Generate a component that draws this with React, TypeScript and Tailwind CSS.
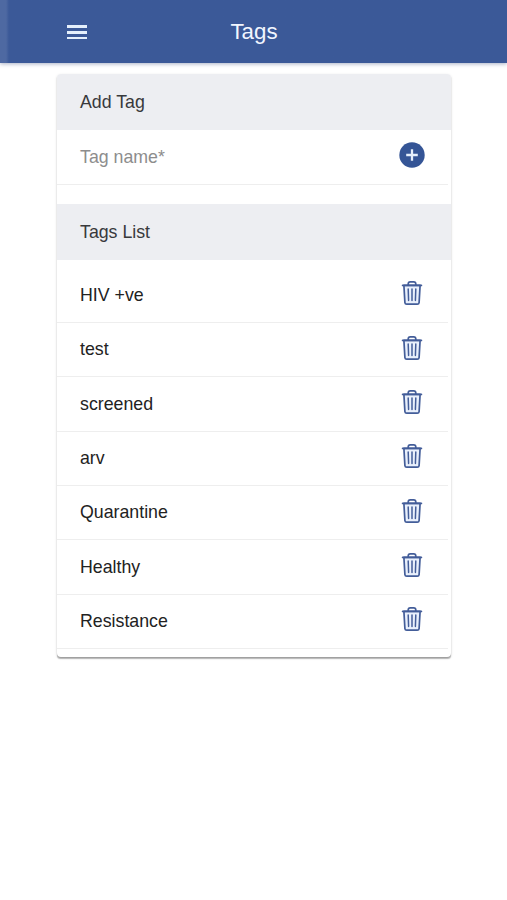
const tags = [
  "HIV +ve",
  "test",
  "screened",
  "arv",
  "Quarantine",
  "Healthy",
  "Resistance",
]

function TrashIcon() {
  return (
    <svg
      width="22"
      height="26"
      viewBox="0 0 22 26"
      fill="none"
      stroke="#435d99"
      strokeWidth="1.7"
      strokeLinecap="round"
      strokeLinejoin="round"
    >
      <path d="M2.9 5.4 3.9 22.6Q4.1 24.2 5.7 24.2H16.3Q17.9 24.2 18.1 22.6L19.1 5.4Z" fill="#e9f0fc" />
      <path d="M1.6 5.4H20.4" />
      <path d="M7.2 5.2V4Q7.2 1.9 9.3 1.9H12.7Q14.8 1.9 14.8 4V5.2" />
      <path d="M7.2 9 7.6 20.4M11 9V20.4M14.8 9 14.4 20.4" strokeWidth="1.5" />
    </svg>
  )
}

export default function App() {
  return (
    <div className="min-h-[900px] bg-white font-['Liberation_Sans',Arial,sans-serif] text-[17.75px] leading-6 text-[#222]">
      {/* Toolbar */}
      <header className="flex h-[62.5px] items-center bg-gradient-to-r from-[#4e69a2] from-[6px] to-[#3b5998] to-[9px] pr-[66px] pl-[67px] text-[#f1f6ff] shadow-[0_1px_4px_rgba(40,60,110,0.4)]">
        <button className="flex w-5 flex-col gap-[3px] pt-[2px]" aria-label="Menu">
          <span className="h-[2.7px] w-full bg-[#e4effc]" />
          <span className="h-[2.7px] w-full bg-[#e4effc]" />
          <span className="h-[2.7px] w-full bg-[#e4effc]" />
        </button>
        <h1 className="flex-1 pt-px pr-[20px] text-center text-[22.3px]">Tags</h1>
      </header>

      <main className="mx-auto mt-[11.5px] h-[583px] w-[394px] overflow-hidden rounded-[4px] bg-white shadow-[0_2px_1px_-0.5px_rgba(0,0,0,0.24),0_1px_1px_rgba(0,0,0,0.1),0_1px_3px_rgba(0,0,0,0.14)]">
        {/* Add Tag */}
        <h2 className="flex h-[55.5px] items-center bg-[#edeef2] pl-[23.5px] text-[#38393c]">Add Tag</h2>
        <div className="mr-[3px] flex h-[55.5px] items-center justify-between border-b border-[#eeeeee] pr-[23px] pl-[23.5px]">
          <span className="text-[#8d8d8d]">Tag name*</span>
          <button aria-label="Add tag" className="-mt-[4px]">
            <svg width="26" height="26" viewBox="0 0 26 26">
              <circle cx="13" cy="13" r="12.7" fill="#355596" />
              <path d="M13 7.2V18.8M7.2 13H18.8" stroke="#e6effc" strokeWidth="2.3" />
            </svg>
          </button>
        </div>

        {/* Tags List */}
        <h2 className="mt-[19px] flex h-[56px] items-center bg-[#edeef2] pl-[23.5px] text-[#38393c]">Tags List</h2>
        <ul className="mr-[3px] pt-[8.7px]">
          {tags.map((tag) => (
            <li
              key={tag}
              className="flex h-[54.33px] items-center justify-between border-b border-[#eeeeee] pr-[25px] pl-[23.5px]"
            >
              <span className="-mt-[0.5px]">{tag}</span>
              <button aria-label={`Delete ${tag}`} className="-mt-[4px]">
                <TrashIcon />
              </button>
            </li>
          ))}
        </ul>
      </main>
    </div>
  )
}
